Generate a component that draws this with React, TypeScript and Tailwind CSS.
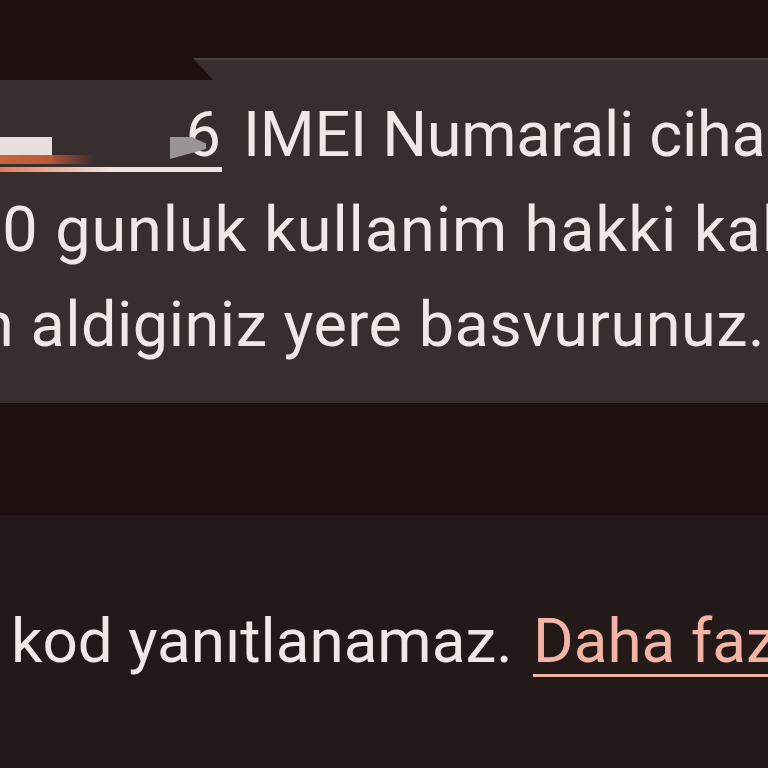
const App = () => {
  return (
    <div
      className="h-[768px] w-[768px] overflow-hidden bg-[#1e100e] text-[#f1e7e4]"
      style={{ fontFamily: 'Roboto, "Noto Sans", sans-serif' }}
    >
      <div className="h-[58px]" />

      {/* Message bubble */}
      <div className="h-[345px] border-t-2 border-[#45403f] bg-[#372e2d] pt-[27px] text-[63px] leading-[95px] [clip-path:polygon(193px_0,100%_0,100%_100%,0_100%,0_22px,213px_22px)]">
        <div className="flex whitespace-nowrap">
          <span className="relative mr-[22px] inline-block w-[221px] shrink-0 text-right">
            <span>6</span>
            {/* redacted number */}
            <span className="absolute left-0 top-[50px] h-[22px] w-[52px] bg-[#e9dedb]" />
            <span className="absolute left-0 top-[68px] h-[9px] w-[95px] rounded-r-full bg-gradient-to-r from-[#c8643d] via-[#b95a3a] to-transparent" />
            <span className="absolute left-[170px] top-[50px] h-[22px] w-[36px] bg-[#9b9494] [clip-path:polygon(0_0,60%_0,100%_30%,100%_55%,0_100%)]" />
            <span className="absolute left-0 top-[80px] h-[5px] w-[222px] bg-gradient-to-r from-[#e07b52] via-[#efe3e0] to-[#efe3e0]" />
          </span>
          <span className="tracking-[-0.3px]">IMEI Numarali cihaziniz</span>
        </div>
        <div className="ml-[-34px] whitespace-nowrap tracking-[0.9px]">20 gunluk kullanim hakki kalmistir.</div>
        <div className="ml-[-21px] whitespace-nowrap tracking-[0.5px]">n aldiginiz yere basvurunuz.</div>
      </div>

      <div className="h-[112px]" />

      {/* Footer note */}
      <div className="h-[253px] bg-[#221918] pt-[78px] text-[62px] leading-[95px]">
        <div className="ml-[11px] whitespace-nowrap">
          kod yanıtlanamaz.{' '}
          <span className="ml-[5px] text-[#f3b4a6] underline decoration-[3px] underline-offset-[12px]">
            Daha fazla bilgi
          </span>
        </div>
      </div>
    </div>
  );
};

export default App;
